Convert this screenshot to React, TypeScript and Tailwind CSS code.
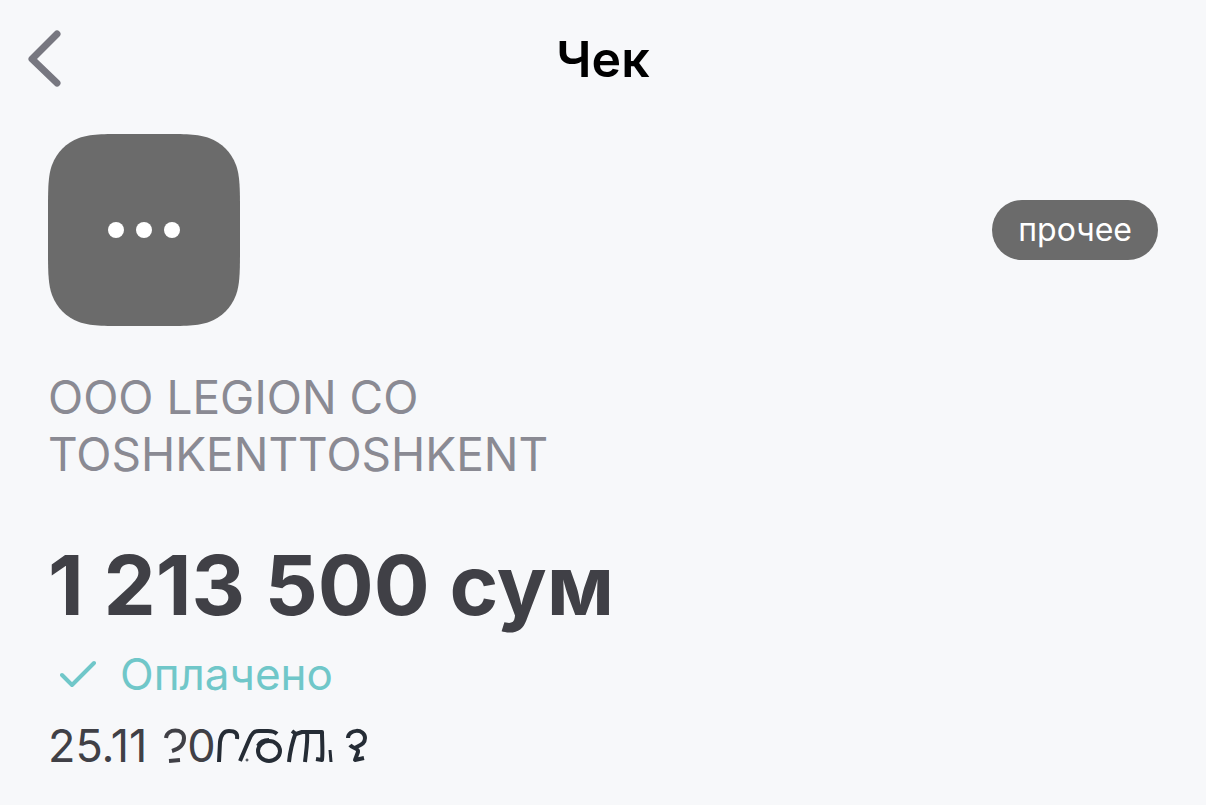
function BackIcon() {
  return (
    <svg viewBox="0 0 36 60" className="h-[60px] w-9" fill="none" stroke="#777780" strokeWidth="7" strokeLinecap="round" strokeLinejoin="round" aria-hidden="true">
      <path d="M31 6 6 31 31 55" />
    </svg>
  );
}

function CategoryIcon() {
  return (
    <svg viewBox="0 0 192 192" className="size-48" role="img" aria-label="прочее">
      <path
        fill="#6b6b6b"
        d="M80 0C55 0 42 0 31 4C18 9 9 18 4 31C0 42 0 55 0 80V112C0 137 0 150 4 161C9 174 18 183 31 188C42 192 55 192 80 192H112C137 192 150 192 161 188C174 183 183 174 188 161C192 150 192 137 192 112V80C192 55 192 42 188 31C183 18 174 9 161 4C150 0 137 0 112 0Z"
      />
      <g fill="#fff">
        <circle cx="68" cy="96" r="8" />
        <circle cx="96" cy="96" r="8" />
        <circle cx="124" cy="96" r="8" />
      </g>
    </svg>
  );
}

function CheckIcon() {
  return (
    <svg viewBox="0 0 36 28" className="h-7 w-9" fill="none" stroke="#70c7c9" strokeWidth="4" strokeLinecap="round" strokeLinejoin="round" aria-hidden="true">
      <path d="M2 15 12 25 34 3" />
    </svg>
  );
}

/* Broken ink mark, partly rubbed out */
function RubbedInk() {
  return (
    <svg viewBox="0 0 24 40" className="h-10 w-6" fill="none" stroke="#404046" strokeWidth="4" aria-hidden="true">
      <path d="M3 12C4 2 21 2 21 12C21 19 16 23 9 25" />
      <path d="M6 35 17 34" />
    </svg>
  );
}

/* Smudged ink strokes after the date */
function SmudgedInk() {
  return (
    <svg viewBox="0 0 154 40" className="h-10 w-[154px]" fill="none" stroke="#252c35" strokeWidth="4" strokeLinejoin="round" aria-hidden="true">
      <path d="M3 36 4 16C5 8 8 5 13 5C19 5 22 7 21 13" />
      <path d="M24 35 33 14C36 7 38 5 43 5H52C56 5 59 6 61 8" />
      <circle cx="31" cy="34" r="1" strokeWidth="1" />
      <ellipse cx="53" cy="25" rx="11" ry="10" />
      <path d="M42 20C44 16 48 14 53 14" />
      <path d="M73 36C74 26 77 14 80 6M76 5 80 8 86 6H91C92 15 90 26 89 36M91 6H106C106 15 107 26 106 34L100 33" />
      <path d="M114 24 115 36" strokeWidth="3" />
      <path d="M132 12C132 3 149 2 149 12C149 18 144 19 139 22M134 19C137 23 143 22 142 26L139 34 148 32" />
    </svg>
  );
}

export default function App() {
  return (
    <main className="min-h-screen bg-[#f7f8fa] font-['Inter','Noto_Sans',sans-serif] text-[#404046]">
      <header className="grid grid-cols-[1fr_auto_1fr] items-start px-[26px] pt-7">
        <button type="button" aria-label="Назад" className="justify-self-start">
          <BackIcon />
        </button>
        <h1 className="text-[50px] leading-[62px] font-semibold text-black">Чек</h1>
      </header>

      <section className="px-12 pt-11">
        <div className="flex items-center justify-between">
          <CategoryIcon />
          <span className="rounded-full bg-[#6b6b6b] px-[26px] text-[32px] leading-[60px] text-white">прочее</span>
        </div>

        <p className="mt-[43px] text-[46px] leading-[57px] text-[#8a8a93]">
          ООО LEGION CO
          <br />
          TOSHKENTTOSHKENT
        </p>

        <p className="mt-[52px] text-[83px] leading-[100px] font-bold">1 213 500 сум</p>

        <div className="mt-[9px] flex items-center gap-6 pl-3 text-[#70c7c9]">
          <CheckIcon />
          <span className="text-[44px] leading-[60px]">Оплачено</span>
        </div>

        <div className="mt-3 flex items-center text-[45px] leading-[60px]">
          <span className="mr-4">25.11</span>
          <RubbedInk />
          <span>0</span>
          <SmudgedInk />
        </div>
      </section>
    </main>
  );
}
